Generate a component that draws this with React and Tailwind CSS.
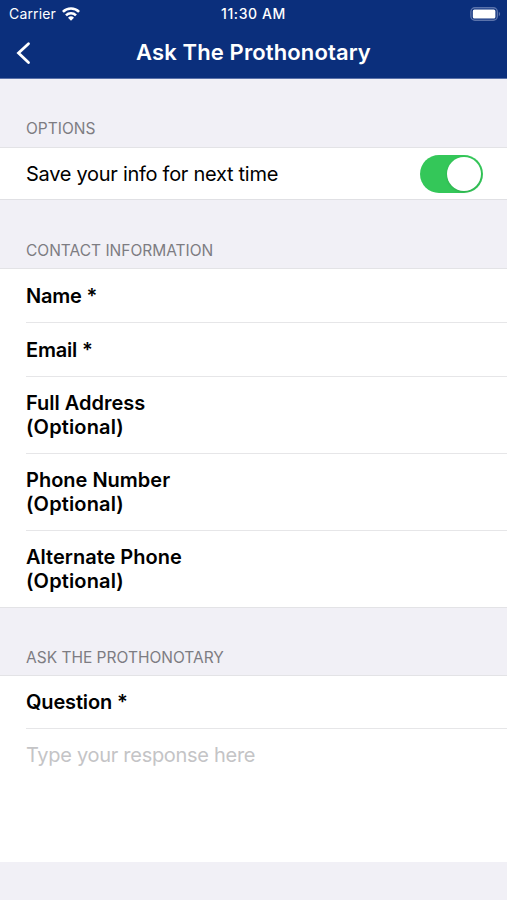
import React, { useState } from 'react';

const contactFields = [
  { label: 'Name', required: true, height: 'h-[54px]' },
  { label: 'Email', required: true, height: 'h-[54px]' },
  { label: 'Full Address', height: 'h-[77px]' },
  { label: 'Phone Number', height: 'h-[77px]' },
  { label: 'Alternate Phone', height: 'h-[76px]' },
];

const StatusBar = () => (
  <div className="relative flex h-[27px] items-center justify-between pl-[9px] pr-[6px] text-[14px] leading-none text-white">
    <div className="flex items-center gap-[6px]">
      <span className="tracking-[0.15px]">Carrier</span>
      <svg width="18" height="14" viewBox="0 0 18 14" fill="none" stroke="currentColor" strokeWidth="2.6">
        <path d="M0.9 4.9a11.5 11.5 0 0 1 16.2 0" />
        <path d="M4 8.3a7.1 7.1 0 0 1 10 0" />
        <path d="M9 13.8 6 10.7a4.3 4.3 0 0 1 6 0z" fill="currentColor" stroke="none" />
      </svg>
    </div>
    <span className="absolute left-1/2 -translate-x-1/2 whitespace-nowrap text-[14px] font-medium tracking-[0.6px]">11:30 AM</span>
    <svg width="31" height="14" viewBox="0 0 31 14">
      <rect x="0.9" y="0.7" width="26.4" height="12.6" rx="4" fill="none" stroke="#5b73ab" strokeWidth="1.4" />
      <rect x="2.8" y="2.5" width="22.6" height="9" rx="1.6" fill="white" />
      <path d="M28.8 4.8c1.8.7 1.8 3.7 0 4.4z" fill="#5b73ab" />
    </svg>
  </div>
);

const SectionTitle = ({ children, className }) => (
  <h2 className={`flex items-end border-b border-[#e3e3e6] bg-[#f1f0f6] pl-[26px] text-[15.5px] leading-[20px] font-normal text-[#7d7c82] ${className}`}>
    {children}
  </h2>
);

const App = () => {
  const [saveInfo, setSaveInfo] = useState(true);

  return (
    <main className="flex h-[900px] w-full flex-col overflow-hidden bg-[#f1f0f6] font-[Inter,sans-serif] text-black">
      <header className="h-[79px] shrink-0 border-b border-[#5a71a8] bg-[#0b2f7c] text-white">
        <StatusBar />
        <div className="relative flex h-[50px] items-center justify-center">
          <button className="absolute left-[16px] top-[14px]" aria-label="Back">
            <svg width="15" height="24" viewBox="0 0 15 24" fill="none" stroke="currentColor" strokeWidth="2.8" strokeLinecap="round">
              <path d="M12.5 2.7 2.5 12l10 9.5" />
            </svg>
          </button>
          <h1 className="text-[22px] font-semibold tracking-[0.12px]">Ask The Prothonotary</h1>
        </div>
      </header>

      {/* Options */}
      <SectionTitle className="h-[69px] pb-[8px]">OPTIONS</SectionTitle>
      <div className="flex h-[52px] items-center justify-between border-b border-[#e0e0e4] bg-white pl-[26px] pr-[24px]">
        <span className="text-[20px] tracking-[-0.28px]">Save your info for next time</span>
        <button
          role="switch"
          aria-checked={saveInfo}
          aria-label="Save your info for next time"
          onClick={() => setSaveInfo(!saveInfo)}
          className={`flex h-[38px] w-[63px] items-center rounded-full p-[2px] ${saveInfo ? 'justify-end bg-[#34c759]' : 'justify-start bg-gray-200'}`}
        >
          <span className="size-[34px] rounded-full bg-white shadow-sm" />
        </button>
      </div>

      {/* Contact information */}
      <SectionTitle className="h-[69px] pb-[7px]">CONTACT INFORMATION</SectionTitle>
      <div className="border-b border-[#e3e3e6] bg-white pl-[26px]">
        {contactFields.map((field) => (
          <div key={field.label} className={`flex flex-col justify-center border-b border-[#e6e6e8] text-[20px] leading-[24px] font-semibold last:border-b-0 ${field.height}`}>
            {field.required ? (
              <span className="tracking-[-0.2px]">{field.label} *</span>
            ) : (
              <>
                <span>{field.label}</span>
                <span className="tracking-[0.15px]">(Optional)</span>
              </>
            )}
          </div>
        ))}
      </div>

      {/* Question */}
      <SectionTitle className="h-[68px] pb-[7px]">ASK THE PROTHONOTARY</SectionTitle>
      <div className="h-[186px] bg-white pl-[26px]">
        <div className="flex h-[53px] items-center border-b border-[#e6e6e8] text-[20px] font-semibold tracking-[-0.15px]">Question *</div>
        <textarea
          aria-label="Question"
          placeholder="Type your response here"
          className="block h-[130px] w-full resize-none pt-[12px] text-[20px] leading-[28px] tracking-[-0.29px] outline-none placeholder:text-[#c4c4c6]"
        />
      </div>
    </main>
  );
};

export default App;
